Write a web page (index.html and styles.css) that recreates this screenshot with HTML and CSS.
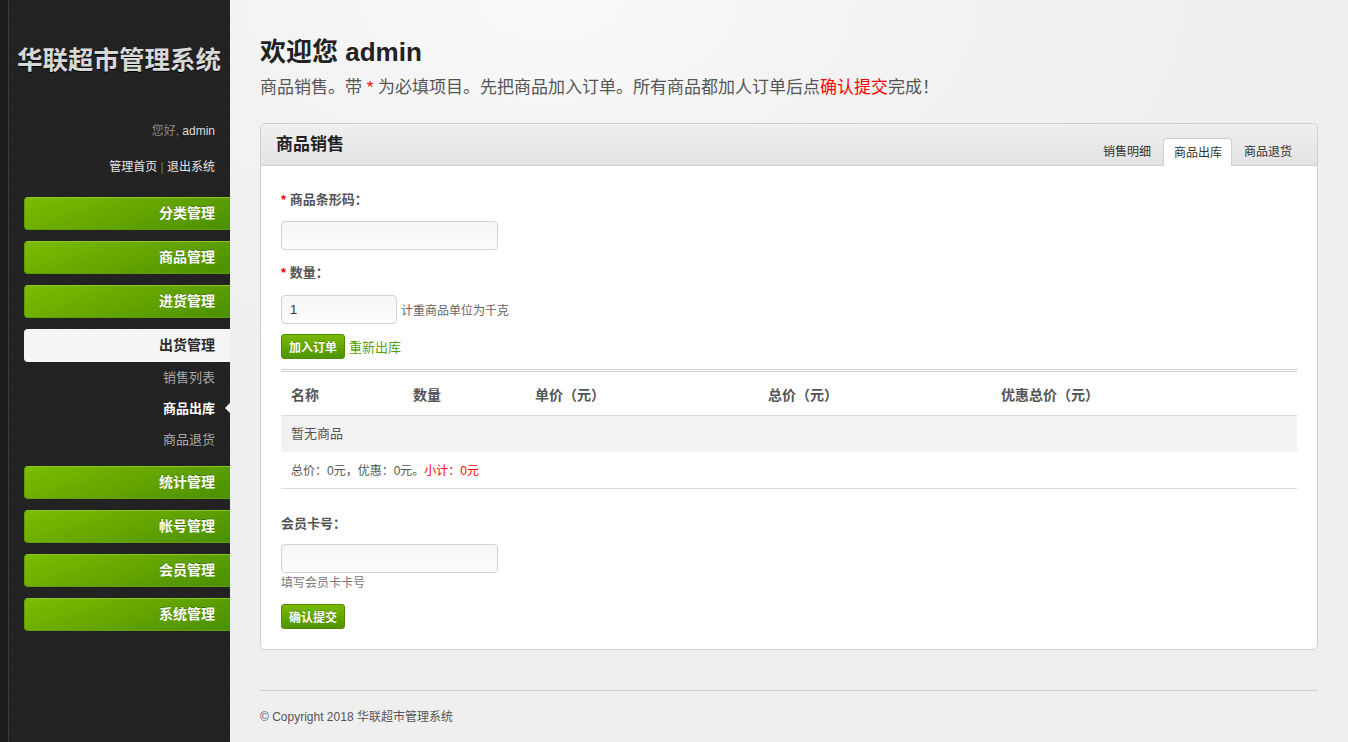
FILE: index.html
```html
<!DOCTYPE html>
<html lang="zh-CN">
<head>
<meta charset="utf-8">
<title>华联超市管理系统</title>
<link rel="stylesheet" href="styles.css">
</head>
<body>
<div class="layout">
  <aside class="sidebar">
    <h1 class="logo">华联超市管理系统</h1>
    <p class="hello"><span class="muted">您好,</span> admin</p>
    <p class="toplinks"><a href="#">管理首页</a> <span class="sep">|</span> <a href="#">退出系统</a></p>
    <nav class="menu">
      <a class="menu-item" href="#">分类管理</a>
      <a class="menu-item" href="#">商品管理</a>
      <a class="menu-item" href="#">进货管理</a>
      <a class="menu-item active" href="#">出货管理</a>
      <ul class="submenu">
        <li><a href="#">销售列表</a></li>
        <li class="current"><a href="#">商品出库</a></li>
        <li><a href="#">商品退货</a></li>
      </ul>
      <a class="menu-item" href="#">统计管理</a>
      <a class="menu-item" href="#">帐号管理</a>
      <a class="menu-item" href="#">会员管理</a>
      <a class="menu-item" href="#">系统管理</a>
    </nav>
  </aside>

  <main class="main">
    <h2 class="page-title">欢迎您 admin</h2>
    <p class="page-desc">商品销售。带 <span class="req">*</span> 为必填项目。先把商品加入订单。所有商品都加人订单后点<span class="red">确认提交</span>完成！</p>

    <section class="box">
      <header class="box-head">
        <h3>商品销售</h3>
        <ul class="tabs">
          <li><a href="#">销售明细</a></li>
          <li class="active"><a href="#">商品出库</a></li>
          <li><a href="#">商品退货</a></li>
        </ul>
      </header>
      <div class="box-body">
        <label class="field-label"><span class="req">*</span> 商品条形码：</label>
        <input class="text-input wide" type="text">
        <label class="field-label second"><span class="req">*</span> 数量：</label>
        <div class="inline-row">
          <input class="text-input small" type="text" value="1">
          <span class="hint">计重商品单位为千克</span>
        </div>
        <div class="actions">
          <button class="btn" type="button">加入订单</button>
          <a class="green-link" href="#">重新出库</a>
        </div>

        <table class="order-table">
          <thead>
            <tr>
              <th class="c1">名称</th>
              <th class="c2">数量</th>
              <th class="c3">单价（元）</th>
              <th class="c4">总价（元）</th>
              <th>优惠总价（元）</th>
            </tr>
          </thead>
          <tbody>
            <tr class="empty"><td colspan="5">暂无商品</td></tr>
            <tr class="sum"><td colspan="5">总价：0元，优惠：0元。<span class="red">小计：0元</span></td></tr>
          </tbody>
        </table>

        <label class="field-label member">会员卡号：</label>
        <input class="text-input wide" type="text">
        <p class="hint block">填写会员卡卡号</p>
        <button class="btn submit" type="button">确认提交</button>
      </div>
    </section>

    <footer class="footer">© Copyright 2018 华联超市管理系统</footer>
  </main>
</div>
</body>
</html>
```

FILE: styles.css
```css
* { box-sizing: border-box; }
html, body { margin: 0; padding: 0; }
body {
  font-family: "Liberation Sans", Arial, "Noto Sans CJK SC", sans-serif;
  font-size: 12px;
  color: #555;
  background: #efefef;
}
a { text-decoration: none; }
ul { list-style: none; margin: 0; padding: 0; }

.layout { display: flex; min-height: 742px; }

/* Sidebar */
.sidebar {
  width: 230px;
  flex: 0 0 230px;
  background:
    linear-gradient(to right, #1c1c1c 0, #1c1c1c 8px, #3a3a3a 8px, #3a3a3a 9px, transparent 9px),
    repeating-linear-gradient(45deg, #242424 0, #242424 1px, #212121 1px, #212121 2px),
    #232323;
  padding-top: 44px;
  text-align: right;
}
.logo {
  margin: 0;
  text-align: center;
  padding-left: 8px;
  font-size: 25.5px;
  line-height: 32px;
  font-weight: bold;
  color: #d8d8d8;
  text-shadow: 0 1px 0 #000;
}
.hello {
  margin: 47px 15px 0 0;
  line-height: 16px;
  color: #ddd;
  font-size: 12px;
}
.hello .muted { color: #8a8a8a; }
.toplinks {
  margin: 20px 15px 0 0;
  line-height: 16px;
  font-size: 12px;
}
.toplinks a { color: #e6e6e6; }
.toplinks .sep { color: #777; }

.menu { margin-top: 22px; display: flex; flex-direction: column; }
.menu-item {
  display: block;
  margin-left: 24px;
  height: 33px;
  line-height: 31px;
  margin-bottom: 11px;
  padding-right: 15px;
  color: #fff;
  font-weight: bold;
  font-size: 14px;
  border-radius: 4px 0 0 4px;
  border: 1px solid #5f9e00;
  border-right: 0;
  border-top-color: #8cc61a;
  background: linear-gradient(160deg, #7cbc00 0%, #68a800 45%, #4a9000 100%);
  text-shadow: 0 -1px 0 rgba(0,0,0,0.25);
}
.menu-item.active {
  background: #f5f5f5;
  border-color: #f5f5f5;
  color: #2a2a2a;
  text-shadow: none;
  margin-bottom: 0;
}
.submenu { margin: 0 0 11px 0; }
.submenu li { height: 31px; line-height: 31px; position: relative; }
.submenu a { color: #a8a8a8; font-size: 13px; padding-right: 15px; }
.submenu .current a { color: #fff; font-weight: bold; }
.submenu .current::after {
  content: "";
  position: absolute;
  right: 0;
  top: 10px;
  border: 5px solid transparent;
  border-right-color: #f5f5f5;
  border-left-width: 0;
}

/* Main */
.main {
  flex: 1;
  padding: 0 30px 0 30px;
  background: radial-gradient(ellipse 700px 380px at 320px 0, #fafafa 0%, #f2f2f2 50%, #efefef 100%);
}
.page-title {
  margin: 36px 0 0 0;
  font-size: 26px;
  line-height: 32px;
  font-weight: bold;
  color: #222;
}
.page-desc {
  margin: 9px 0 0 0;
  font-size: 17px;
  line-height: 22px;
  color: #555;
}
.req { color: #e00; }
.red { color: #f00; }

.box {
  margin-top: 24px;
  background: #fff;
  border: 1px solid #cfcfcf;
  border-radius: 5px;
}
.box-head {
  height: 42px;
  display: flex;
  justify-content: space-between;
  align-items: flex-end;
  background: linear-gradient(#efefef, #e3e3e3);
  border-bottom: 1px solid #cfcfcf;
  border-radius: 5px 5px 0 0;
  padding: 0 13px 0 15px;
}
.box-head h3 {
  margin: 0;
  align-self: center;
  font-size: 17px;
  line-height: 24px;
  color: #222;
  font-weight: bold;
}
.tabs { display: flex; margin-bottom: -1px; }
.tabs li {
  height: 28px;
  line-height: 28px;
  padding: 0 12px;
  border-radius: 4px 4px 0 0;
}
.tabs li a { color: #333; font-size: 12px; }
.tabs li.active {
  background: #fff;
  border: 1px solid #cfcfcf;
  border-bottom: 0;
  padding: 0 9px 0 10px;
}

.box-body { padding: 24px 20px 20px 20px; }
.field-label {
  display: block;
  font-size: 13px;
  line-height: 20px;
  font-weight: bold;
  color: #555;
  margin-bottom: 11px;
}
.field-label.second { margin-top: 13px; margin-bottom: 12px; }
.field-label.member { margin-top: 25px; margin-bottom: 10px; }
.text-input {
  display: block;
  height: 29px;
  border: 1px solid #d2d2d2;
  border-radius: 4px;
  background: linear-gradient(#f6f6f6, #fdfdfd);
  font-family: "Liberation Sans", Arial, "Noto Sans CJK SC", sans-serif;
  font-size: 13px;
  color: #333;
  padding: 0 8px;
  margin: 0;
}
.text-input.wide { width: 217px; }
.text-input.small { width: 116px; display: inline-block; }
.inline-row { display: flex; align-items: center; gap: 4px; }
.hint { color: #666; font-size: 12px; }
.hint.block { margin: 2px 0 0 0; line-height: 16px; color: #777; }

.actions { margin-top: 10px; display: flex; align-items: center; gap: 4px; }
.btn {
  height: 25px;
  padding: 0 7px;
  border: 1px solid #4f8c00;
  border-radius: 3px;
  background: linear-gradient(#7ab900, #4d9400);
  color: #fff;
  font-weight: bold;
  font-size: 12px;
  font-family: "Liberation Sans", Arial, "Noto Sans CJK SC", sans-serif;
  cursor: pointer;
  text-shadow: 0 -1px 0 rgba(0,0,0,0.2);
}
.green-link { color: #5b9f00; font-size: 13px; }

.order-table {
  width: 100%;
  margin-top: 10px;
  border-collapse: collapse;
  border-top: 3px double #cfcfcf;
}
.order-table th {
  text-align: left;
  height: 45px;
  padding: 1px 10px 0 10px;
  font-size: 14px;
  font-weight: bold;
  color: #555;
  border-bottom: 1px solid #dcdcdc;
}
.order-table .c1, .order-table .c2 { width: 122px; }
.order-table .c3, .order-table .c4 { width: 233px; }
.order-table td { padding: 0 10px; font-size: 13px; color: #555; }
.order-table .empty td { background: #f2f2f2; height: 36px; padding-bottom: 2px; }
.order-table .sum td { height: 37px; font-size: 12px; border-bottom: 1px solid #dcdcdc; color: #555; }

.submit { margin-top: 13px; }

.footer {
  margin-top: 40px;
  border-top: 1px solid #cfcfcf;
  padding-top: 18px;
  line-height: 16px;
  font-size: 12px;
  color: #555;
}
```
